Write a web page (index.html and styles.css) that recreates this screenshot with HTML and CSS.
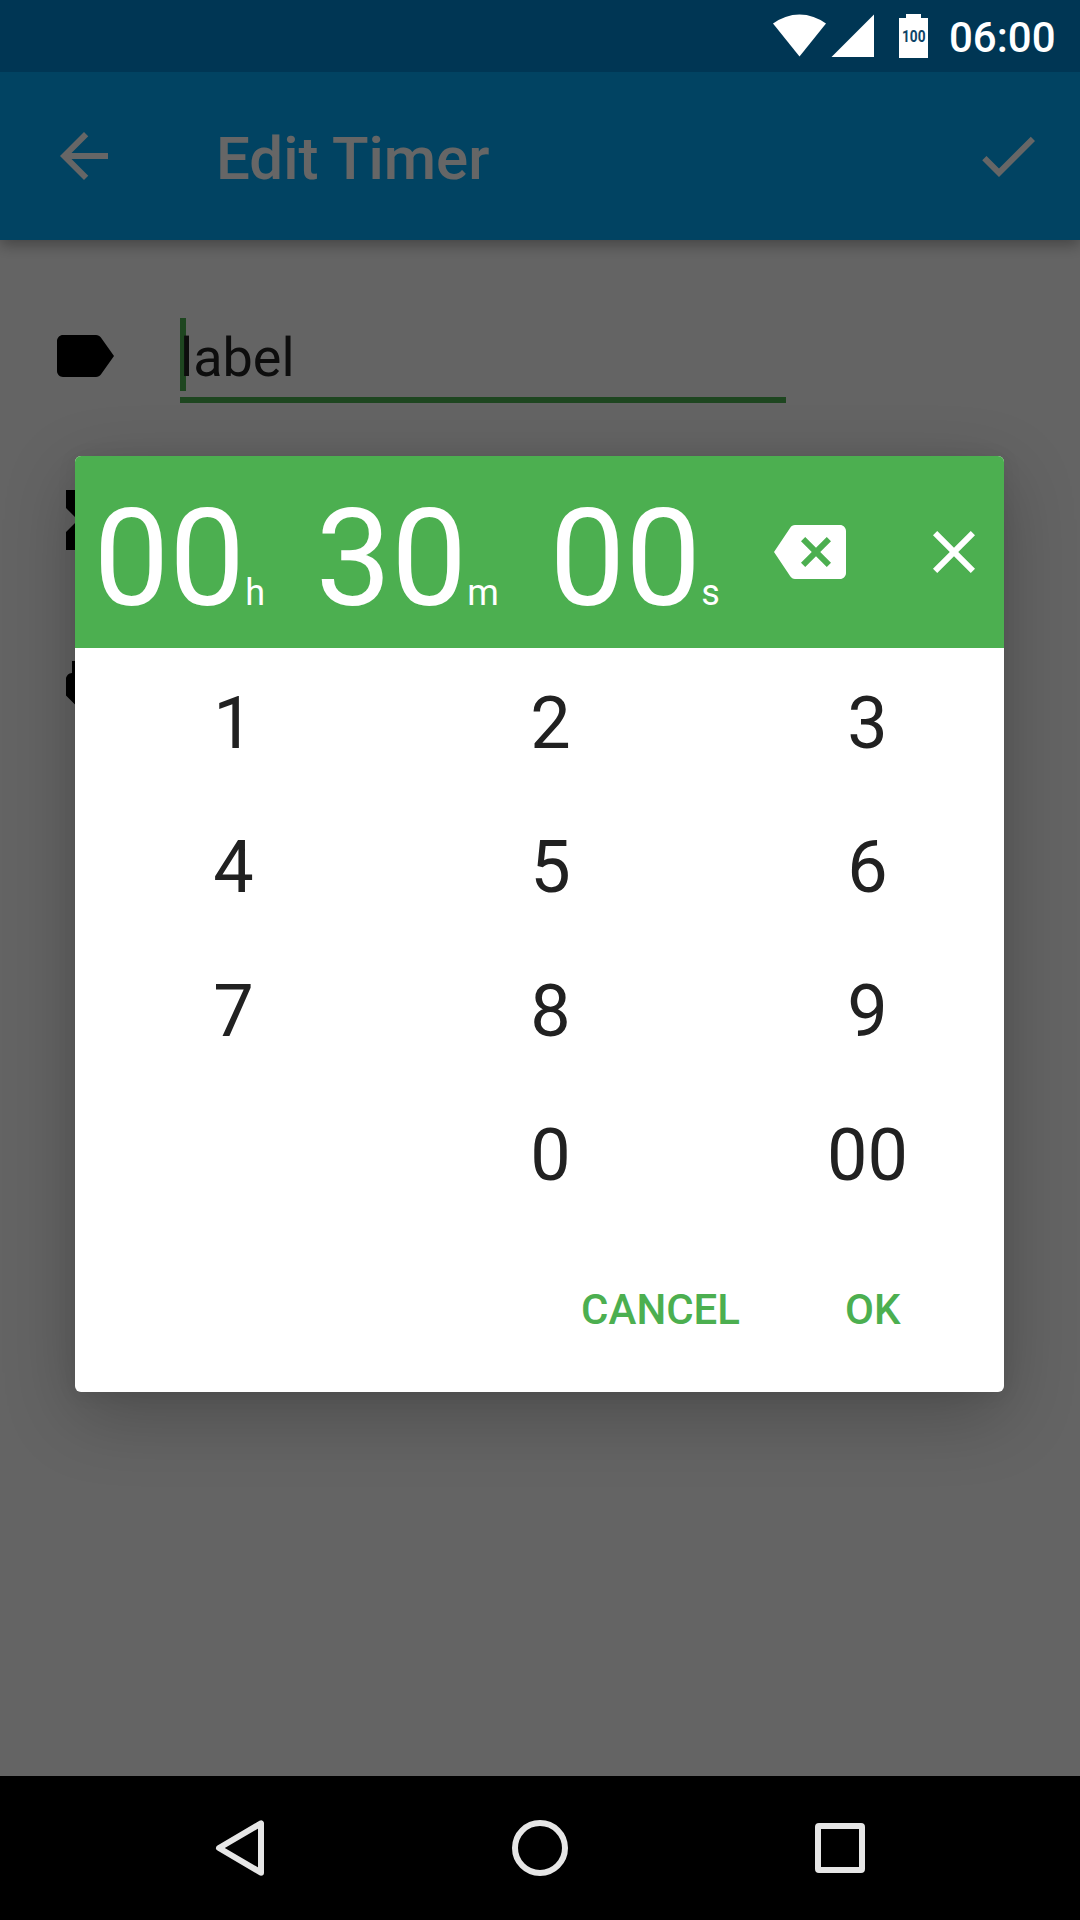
FILE: index.html
```html
<!DOCTYPE html>
<html lang="en">
<head>
<meta charset="utf-8">
<title>Edit Timer</title>
<link rel="stylesheet" href="styles.css">
</head>
<body>
<div class="screen">
  <div class="app">
    <div class="status-space"></div>
    <header class="app-bar">
      <svg class="icon" viewBox="0 0 24 24"><path d="M20 11H7.83l5.59-5.59L12 4l-8 8 8 8 1.41-1.41L7.83 13H20v-2z"/></svg>
      <h1 class="title">Edit Timer</h1>
      <svg class="icon" viewBox="0 0 24 24"><path d="M9 16.17L4.83 12l-1.42 1.41L9 19 21 7l-1.41-1.41z"/></svg>
    </header>
    <main class="form">
      <div class="row row-label">
        <svg class="icon" viewBox="0 0 24 24"><path d="M17.63 5.84C17.27 5.33 16.67 5 16 5L5 5.01C3.9 5.01 3 5.9 3 7v10c0 1.1.9 1.99 2 1.99L16 19c.67 0 1.27-.33 1.63-.84L22 12l-4.37-6.16z"/></svg>
        <div class="field"><span class="caret"></span><span class="hint">label</span></div>
      </div>
      <div class="row row-time">
        <svg class="icon" viewBox="0 0 24 24"><path d="M6 2v6h.01L6 8.01 10 12l-4 4 .01.01H6V22h12v-5.99h-.01L18 16l-4-4 4-3.99-.01-.01H18V2H6z"/></svg>
      </div>
      <div class="row">
        <svg class="icon" viewBox="0 0 24 24"><path d="M16.01 7L16 3h-2v4h-4V3H8v4h-.01C7 6.99 6 7.99 6 8.99v5.49L9.5 18v3h5v-3l3.5-3.51v-5.5c0-1-1-2-1.99-1.99z"/></svg>
      </div>
    </main>
    <nav class="nav-bar">
      <svg class="nav-icon" viewBox="0 0 60 60"><path d="M51 5.300v49.400L9 30z"/></svg>
      <svg class="nav-icon" viewBox="0 0 60 60"><circle cx="30" cy="30" r="25"/></svg>
      <svg class="nav-icon" viewBox="0 0 60 60"><rect x="8" y="8" width="44" height="44" rx="1"/></svg>
    </nav>
  </div>

  <div class="scrim">
    <section class="dialog">
      <div class="dialog-head">
        <div class="unit unit-h">00<small>h</small></div>
        <div class="unit unit-m">30<small>m</small></div>
        <div class="unit unit-s">00<small>s</small></div>
        <svg class="icon" viewBox="0 0 24 24"><path d="M22 3H7c-.69 0-1.23.35-1.59.88L0 12l5.41 8.11c.36.53.9.89 1.59.89h15c1.1 0 2-.9 2-2V5c0-1.100-.9-2-2-2zm-3 12.590L17.590 17 14 13.410 10.410 17 9 15.590 12.590 12 9 8.410 10.410 7 14 10.590 17.590 7 19 8.410 15.410 12 19 15.590z"/></svg>
        <svg class="icon icon-close" viewBox="0 0 24 24"><path d="M19 6.410L17.590 5 12 10.590 6.410 5 5 6.410 10.590 12 5 17.590 6.410 19 12 13.410 17.590 19 19 17.590 13.410 12z"/></svg>
      </div>
      <div class="keypad">
        <span>1</span><span>2</span><span>3</span>
        <span>4</span><span>5</span><span>6</span>
        <span>7</span><span>8</span><span>9</span>
        <span></span><span>0</span><span>00</span>
      </div>
      <div class="actions"><span>CANCEL</span><span>OK</span></div>
    </section>
  </div>

  <div class="status-bar">
    <svg class="signals" viewBox="0 0 160 48" width="160" height="48">
      <path d="M0 9.500A44 44 0 0 1 53 9.500L26.500 42.500z"/>
      <path d="M101 .5V43H58.500z"/>
      <path d="M126 4h7V0h15v4h7v40h-29z"/>
      <text class="level" x="129" y="28.200" textLength="23.500" lengthAdjust="spacingAndGlyphs">100</text>
    </svg>
    <span class="clock">06:00</span>
  </div>
</div>
</body>
</html>
```

FILE: styles.css
```css
* { box-sizing: border-box; }

body {
  margin: 0;
  background: #000;
  font-family: Roboto, sans-serif;
}

.screen {
  position: relative;
  width: 1080px;
  height: 1920px;
  overflow: hidden;
}

.app {
  display: flex;
  flex-direction: column;
  height: 100%;
  background: #fafafa;
}

.icon {
  display: block;
  flex: none;
  width: 72px;
  height: 72px;
}

.status-space {
  position: relative;
  height: 72px;
  background: #0288d1;
}

.app-bar {
  display: flex;
  align-items: center;
  height: 168px;
  padding: 0 36px 0 48px;
  background: #03a9f4;
  color: #fff;
  fill: #fff;
  box-shadow: 0 5px 14px rgba(0, 0, 0, .32);
}

.title {
  flex: 1;
  margin: 0;
  padding: 6px 0 0 96px;
  font-size: 60px;
  font-weight: 500;
  line-height: 70px;
}

.form {
  flex: 1;
  padding: 78px 48px 0;
}

.row {
  display: flex;
  align-items: flex-start;
}

.row-label { height: 166px; }
.row-label .icon { margin-top: 2px; }
.row-time { height: 168px; }

.field {
  display: flex;
  width: 606px;
  height: 85px;
  margin-left: 60px;
  border-bottom: 6px solid #4caf50;
}

.caret {
  width: 6px;
  height: 73px;
  margin-right: -6px;
  background: #4caf50;
}

.hint {
  position: relative;
  color: #212121;
  font-size: 54px;
  line-height: 80px;
}

.nav-bar {
  display: flex;
  justify-content: space-between;
  align-items: center;
  height: 144px;
  padding: 0 210px;
  background: #000;
}

.nav-icon {
  width: 60px;
  height: 60px;
  fill: none;
  stroke: #e6e6e6;
  stroke-width: 6;
  stroke-linejoin: round;
}

/* Dims everything above the navigation bar */
.scrim {
  position: absolute;
  inset: 0 0 144px;
  padding: 456px 76px 0 75px;
  background: rgba(0, 0, 0, .6);
  overflow: hidden;
}

.dialog {
  height: 936px;
  border-radius: 6px;
  background: #fff;
  box-shadow: 0 22px 72px rgba(0, 0, 0, .24), 0 2px 20px rgba(0, 0, 0, .07);
}

.dialog-head {
  display: flex;
  align-items: center;
  height: 192px;
  padding-left: 18.500px;
  border-radius: 6px 6px 0 0;
  background: #4caf50;
  color: #fff;
  fill: #fff;
}

.unit {
  padding-top: 14px;
  font-size: 135px;
  line-height: 158px;
  white-space: nowrap;
}

.unit small {
  font-size: 36px;
  line-height: 1;
}

.unit-h { width: 222px; }
.unit-m { width: 234px; }
.unit-s { width: 224.500px; }
.icon-close { margin-left: 72px; }

.keypad {
  display: grid;
  grid-template-columns: repeat(3, 317px);
  grid-template-rows: repeat(4, 144px);
  color: #212121;
  font-size: 72px;
  line-height: 152px;
  text-align: center;
}

.actions {
  display: flex;
  justify-content: flex-end;
  gap: 105px;
  padding: 61px 103.500px 0 0;
  color: #4caf50;
  font-size: 42px;
  font-weight: 500;
  line-height: 50px;
}

.status-bar {
  position: absolute;
  inset: 0 0 auto;
  display: flex;
  justify-content: flex-end;
  height: 72px;
  padding: 14px 24px 0 0;
  color: #fff;
  fill: #fff;
}

.signals { flex: none; }

.level {
  fill: #0f4468;
  font-size: 17px;
  font-weight: 700;
}

.clock {
  width: 107px;
  margin-left: 16px;
  font-size: 42px;
  font-weight: 500;
  line-height: 47px;
}
```
